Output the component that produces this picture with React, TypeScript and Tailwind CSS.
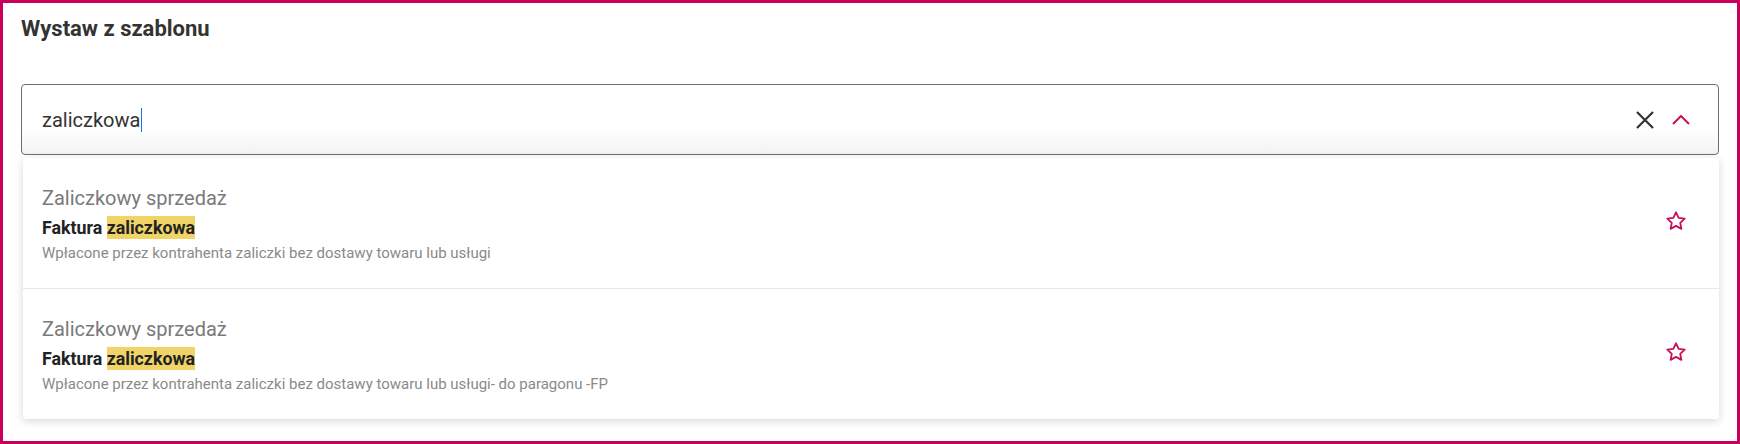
import React from 'react';

interface TemplateRow {
  id: number;
  category: string;
  name: string;
  match: string;
  description: string;
}

const templates: TemplateRow[] = [
  {
    id: 1,
    category: 'Zaliczkowy sprzedaż',
    name: 'Faktura ',
    match: 'zaliczkowa',
    description: 'Wpłacone przez kontrahenta zaliczki bez dostawy towaru lub usługi',
  },
  {
    id: 2,
    category: 'Zaliczkowy sprzedaż',
    name: 'Faktura ',
    match: 'zaliczkowa',
    description:
      'Wpłacone przez kontrahenta zaliczki bez dostawy towaru lub usługi- do paragonu -FP',
  },
];

const StarIcon = () => (
  <svg width="22" height="22" viewBox="0 0 24 24" fill="none" className="-mt-[4px] text-[#c8105a]">
    <path
      d="M12 2.5l2.9 6.1 6.6.8-4.9 4.6 1.3 6.6L12 17.3l-5.9 3.3 1.3-6.6-4.9-4.6 6.6-.8z"
      stroke="currentColor"
      strokeWidth="2"
      strokeLinejoin="round"
    />
  </svg>
);

const TemplateItem: React.FC<{ row: TemplateRow; last: boolean }> = ({ row, last }) => {
  return (
    <div
      className={`flex items-center justify-between py-[26px] pl-[19px] pr-[32px] ${
        last ? '' : 'border-b border-[#e8e8e8]'
      }`}
    >
      <div className="flex flex-col">
        <div className="text-[20px] leading-[28px] text-[#7a7a7a]">{row.category}</div>
        <div className="mt-[6px] text-[17.8px] font-bold leading-[20px] text-[#222]">
          {row.name}
          <span className="bg-[#f0d468] py-[1px]">{row.match}</span>
        </div>
        <div className="mt-[6px] text-[15px] leading-[18px] text-[#8a8a8a]">
          {row.description}
        </div>
      </div>
      <StarIcon />
    </div>
  );
};

export default function App() {
  return (
    <div
      className="box-border h-[444px] w-[1740px] border-[3px] border-[#c8005a] bg-white px-[18px] pt-[12px]"
      style={{ fontFamily: 'Roboto, "Noto Sans", sans-serif' }}
    >
      <h1 className="text-[22px] font-bold leading-[28px] text-[#333]">Wystaw z szablonu</h1>
      <div className="relative mt-[41px]">
        <div className="flex h-[71px] items-center justify-between rounded-[4px] border border-[#6e6e6e] bg-gradient-to-b from-white from-60% to-[#f3f3f3] pl-[20px] pr-[28px]">
          <div className="flex items-center text-[20px] text-[#333]">
            <span>zaliczkowa</span>
            <span className="ml-[1px] h-[24px] w-[1px] bg-[#1a73e8]" />
          </div>
          <div className="flex items-center gap-[18px]">
            {/* clear */}
            <svg width="18" height="18" viewBox="0 0 18 18" className="text-[#333]">
              <path d="M1 1l16 16M17 1L1 17" stroke="currentColor" strokeWidth="2.2" />
            </svg>
            {/* collapse */}
            <svg width="18" height="10" viewBox="0 0 18 10" fill="none" className="mt-[1px] text-[#c8105a]">
              <path d="M1 9l8-8 8 8" stroke="currentColor" strokeWidth="2" />
            </svg>
          </div>
        </div>
        <div className="absolute left-[2px] right-0 top-[calc(100%+3px)] rounded-[3px] bg-white shadow-[0_2px_8px_rgba(0,0,0,0.16)]">
          {templates.map((row, i) => (
            <TemplateItem key={row.id} row={row} last={i === templates.length - 1} />
          ))}
        </div>
      </div>
    </div>
  );
}
